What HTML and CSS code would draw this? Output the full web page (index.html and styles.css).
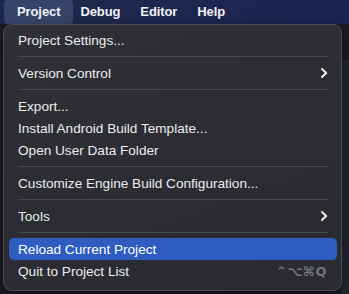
FILE: index.html
```html
<!DOCTYPE html>
<html>
<head>
<meta charset="utf-8">
<link rel="stylesheet" href="styles.css">
</head>
<body>
<div class="screen">
  <div class="menubar">
    <div class="mb-item active">Project</div>
    <div class="mb-item">Debug</div>
    <div class="mb-item">Editor</div>
    <div class="mb-item">Help</div>
  </div>
  <div class="backdrop">
    <div class="app-right"></div>
  </div>
  <div class="menu">
    <div class="item"><span>Project Settings...</span></div>
    <div class="sep"></div>
    <div class="item"><span>Version Control</span><svg class="chev" width="8" height="12" viewBox="0 0 8 12"><path d="M2 2 L6.2 6 L2 10" fill="none" stroke="#ececee" stroke-width="2" stroke-linecap="round" stroke-linejoin="round"/></svg></div>
    <div class="sep"></div>
    <div class="item"><span>Export...</span></div>
    <div class="item"><span>Install Android Build Template...</span></div>
    <div class="item"><span>Open User Data Folder</span></div>
    <div class="sep"></div>
    <div class="item"><span>Customize Engine Build Configuration...</span></div>
    <div class="sep"></div>
    <div class="item"><span>Tools</span><svg class="chev" width="8" height="12" viewBox="0 0 8 12"><path d="M2 2 L6.2 6 L2 10" fill="none" stroke="#ececee" stroke-width="2" stroke-linecap="round" stroke-linejoin="round"/></svg></div>
    <div class="sep"></div>
    <div class="item selected"><span>Reload Current Project</span></div>
    <div class="item"><span>Quit to Project List</span><span class="shortcut">⌃⌥⌘Q</span></div>
  </div>
</div>
</body>
</html>
```
FILE: styles.css
```css
html, body {
  margin: 0;
  padding: 0;
}
body {
  width: 349px;
  height: 294px;
  overflow: hidden;
  background: #1b1d24;
  font-family: "Liberation Sans", Arial, sans-serif;
}
.screen {
  position: relative;
  width: 349px;
  height: 294px;
}
.menubar {
  height: 24px;
  background: linear-gradient(90deg, #1f2748 0%, #1d2650 60%, #1b2350 100%);
  display: flex;
  align-items: stretch;
  padding-left: 4px;
}
.mb-item {
  color: #f2f2f5;
  font-size: 13px;
  font-weight: bold;
  line-height: 23px;
  padding: 0 10px;
  border-radius: 4px;
  letter-spacing: -0.1px;
}
.mb-item.active {
  background: #37446a;
  padding: 0 13px;
  margin-right: -3px;
}
.backdrop {
  height: 270px;
  background: #1a1c22;
  position: relative;
}
.app-right {
  position: absolute;
  right: 0;
  top: 36px;
  width: 8px;
  height: 234px;
  background: #23262e;
}
.menu {
  position: absolute;
  left: 3px;
  top: 24px;
  width: 337px;
  height: 261px;
  padding: 4px 0 0 0;
  background: linear-gradient(160deg, #2e3035 0%, #2b2d33 50%, #292b31 100%);
  border: 1px solid #4a4c52;
  border-radius: 9px;
  box-shadow: 0 4px 12px rgba(0,0,0,0.5);
  box-sizing: content-box;
}
.item {
  height: 22px;
  margin: 0 4px 0 5px;
  padding: 0 10px 0 9px;
  display: flex;
  align-items: center;
  justify-content: space-between;
  color: #ececee;
  font-size: 13.6px;
  border-radius: 5px;
}
.item.selected {
  background: #2f5cc0;
  color: #ffffff;
}
.sep {
  height: 11px;
  margin: 0 13px 0 14px;
  display: flex;
  align-items: center;
}
.sep::before {
  content: "";
  display: block;
  width: 100%;
  height: 1px;
  background: #46484e;
}
.chev {
  display: block;
  margin-right: -1px;
}
.shortcut {
  color: #74767c;
  font-family: "DejaVu Sans", sans-serif;
  font-size: 13px;
  font-weight: bold;
  letter-spacing: 0.5px;
  margin-right: 0;
}
```
